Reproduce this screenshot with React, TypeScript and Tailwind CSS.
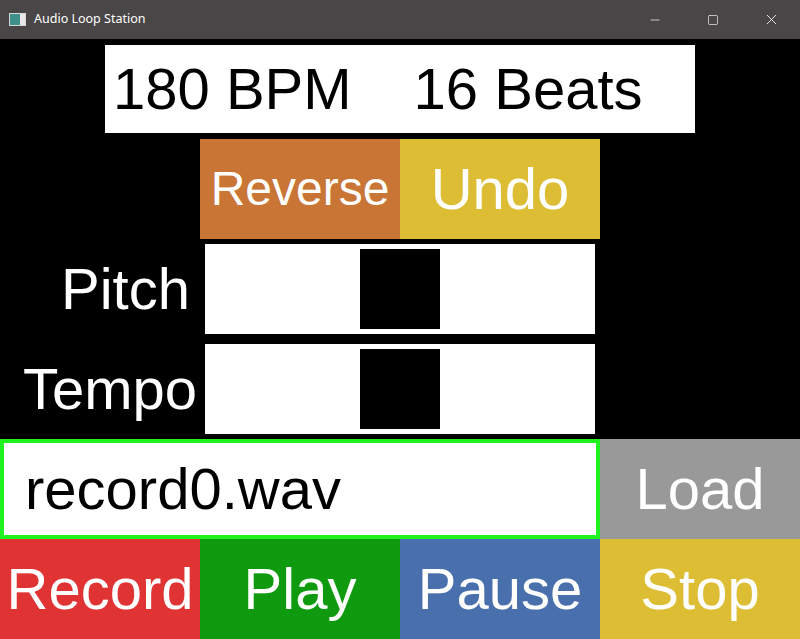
import { Minus, Square, X } from 'lucide-react';

function Slider() {
    return (
        <div className="col-span-2 p-[5px]">
            <div className="h-full bg-white flex items-center justify-center py-[5px]">
                <div className="w-[80px] h-full bg-black" />
            </div>
        </div>
    );
}

export default function App() {
    return (
        <div className="w-[800px] h-[639px] flex flex-col bg-black overflow-hidden font-['Liberation_Sans',Arial,sans-serif]">
            {/* Window title bar */}
            <div className="h-[39px] bg-[#484646] flex items-center text-white shrink-0">
                <div className="ml-[9px] w-[17px] h-[13px] border border-[#d8d8d8] bg-[#e8e8e8] flex">
                    <div className="w-[10px] h-full bg-[#3f8f8a]" />
                </div>
                <span className="ml-[8px] text-[12.5px] font-['Noto_Sans',sans-serif]">Audio Loop Station</span>
                <div className="ml-auto flex h-full">
                    <div className="w-[58px] flex items-center justify-center"><Minus size={14} strokeWidth={1.2} /></div>
                    <div className="w-[58px] flex items-center justify-center"><Square size={12} strokeWidth={1.3} /></div>
                    <div className="w-[58px] flex items-center justify-center"><X size={17} strokeWidth={1.2} /></div>
                </div>
            </div>

            {/* Main grid */}
            <div className="grid grid-cols-4 grid-rows-6 h-[600px] text-[58px] leading-none">
                {/* Row 1 */}
                <div className="col-span-4 flex items-center justify-center py-[6px]">
                    <div className="w-[590px] h-full bg-white text-black flex items-center pl-[8px] gap-[62px]">
                        <span>180 BPM</span>
                        <span>16 Beats</span>
                    </div>
                </div>

                {/* Row 2 */}
                <div />
                <div className="bg-[#c97535] text-white text-[48px] flex items-center justify-center">Reverse</div>
                <div className="bg-[#dcbd33] text-white flex items-center justify-center">Undo</div>
                <div />

                {/* Row 3 */}
                <div className="text-white flex items-center justify-end pr-[10px]">Pitch</div>
                <Slider />
                <div />

                {/* Row 4 */}
                <div className="text-white flex items-center justify-end pr-[3px]">Tempo</div>
                <Slider />
                <div />

                {/* Row 5 */}
                <div className="col-span-3 bg-white border-[4px] border-[#1ff21f] text-black flex items-center pl-[21px]">
                    record0.wav
                </div>
                <div className="bg-[#999999] text-white flex items-center justify-center">Load</div>

                {/* Row 6 */}
                <div className="bg-[#e03434] text-white flex items-center justify-center">Record</div>
                <div className="bg-[#109a10] text-white flex items-center justify-center">Play</div>
                <div className="bg-[#4a6fad] text-white flex items-center justify-center">Pause</div>
                <div className="bg-[#dcbd33] text-white flex items-center justify-center">Stop</div>
            </div>
        </div>
    );
}
